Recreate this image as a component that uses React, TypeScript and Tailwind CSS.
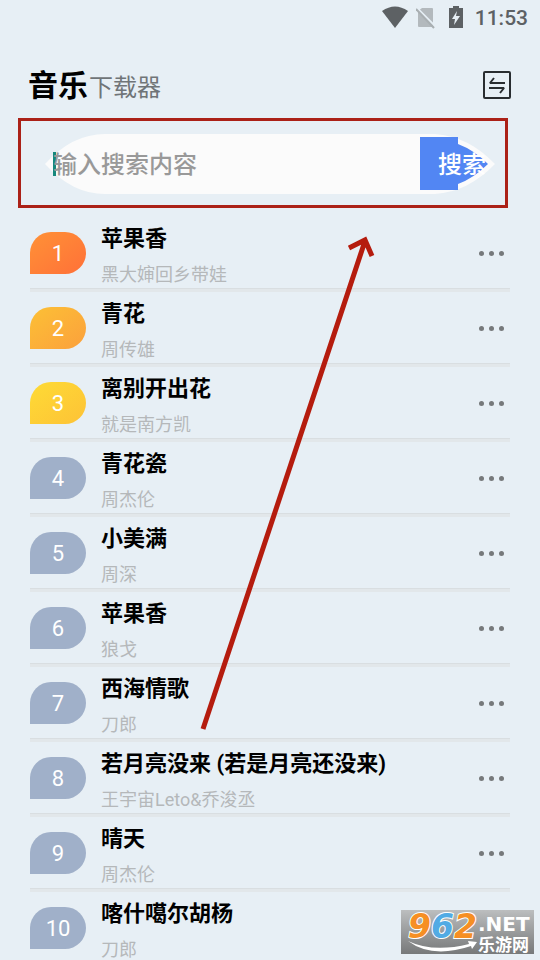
const songs = [
  { title: "苹果香", artist: "黑大婶回乡带娃" },
  { title: "青花", artist: "周传雄" },
  { title: "离别开出花", artist: "就是南方凯" },
  { title: "青花瓷", artist: "周杰伦" },
  { title: "小美满", artist: "周深" },
  { title: "苹果香", artist: "狼戈" },
  { title: "西海情歌", artist: "刀郎" },
  { title: "若月亮没来 (若是月亮还没来)", artist: "王宇宙Leto&乔浚丞" },
  { title: "晴天", artist: "周杰伦" },
  { title: "喀什噶尔胡杨", artist: "刀郎" },
];

const badgeColors = [
  "bg-linear-to-br from-[#ff9136] to-[#ff7038]",
  "bg-linear-to-br from-[#fcc035] to-[#fba03c]",
  "bg-linear-to-br from-[#fedb35] to-[#fdc236]",
];

function StatusBar() {
  return (
    <div className="flex h-9 items-center justify-end pr-3 text-[#5d6164]">
      <svg className="h-6 w-7" viewBox="0 0 28 24" fill="currentColor">
        <path d="M0 5Q13-4 26 5L13 22Z" />
      </svg>
      <svg className="ml-1.5 h-6 w-5" viewBox="0 0 20 24">
        <path d="M6 2H16Q17 2 17 3V21H3Q2 21 2 20V5Z" fill="#b3b9bd" />
        <path d="M1 2L19 20" stroke="#e7eff5" strokeWidth="2" />
        <path d="M0 3L18 22" stroke="#a9afb2" strokeWidth="2" />
      </svg>
      <svg className="ml-3 h-6 w-4" viewBox="0 0 16 24">
        <path d="M5 0H11V2H15V22H1V2H5Z" fill="currentColor" />
        <path d="M9 5L4 13H7L6 19L12 10H8Z" fill="#e7eff5" />
      </svg>
      <time className="ml-[11px] text-[21px] leading-9 font-medium">11:53</time>
    </div>
  );
}

function Header() {
  return (
    <header className="flex h-[82px] items-end justify-between pr-7 pb-2 pl-7">
      <h1 className="flex items-baseline gap-px leading-[48px]">
        <span className="text-[30px] font-bold text-black">音乐</span>
        <span className="text-2xl text-[#707578]">下载器</span>
      </h1>
      <button type="button" aria-label="切换" className="mb-2.5">
        <svg
          className="h-[30px] w-[30px] text-[#292d30]"
          viewBox="0 0 30 30"
          fill="none"
          stroke="currentColor"
          strokeWidth="2"
        >
          <rect x="2" y="2" width="26" height="26" rx="1" />
          <path d="M23 13H8L12 8M7 18H22L18 23" strokeLinejoin="bevel" />
        </svg>
      </button>
    </header>
  );
}

function SearchBar() {
  return (
    <div className="mr-8 ml-[18px] border-[3px] border-[#ab2117] pt-[13px] pr-2.5 pb-[11px] pl-6">
      <form className="relative flex h-[60px]" onSubmit={(e) => e.preventDefault()}>
        <div className="absolute inset-0 flex">
          <svg className="h-full w-[60px] text-[#fbfbfb]" viewBox="0 0 60 60" fill="currentColor">
            <path d="M0 30Q27 0 60 0V60Q27 60 0 30Z" />
          </svg>
          <div className="flex-1 bg-[#fbfbfb]" />
          <svg className="h-full w-[75px]" viewBox="0 0 75 60">
            <path d="M0 0H15Q48 2 75 30Q48 58 15 60H0Z" fill="#fbfbfb" />
            <path d="M0 3H38V10Q54 16 68 30Q54 44 38 50V56H0Z" fill="#5286f3" />
          </svg>
        </div>
        {/* text caret */}
        <span className="absolute top-[18px] left-2 h-6 w-[3px] bg-[#16887c]" />
        <input
          type="text"
          aria-label="搜索内容"
          placeholder="输入搜索内容"
          className="relative ml-2 min-w-0 flex-1 bg-transparent pt-0.5 text-2xl font-medium outline-none placeholder:text-[#999]"
        />
        <button
          type="submit"
          className="relative w-[75px] pt-0.5 pl-[18px] text-left text-2xl font-medium whitespace-nowrap text-white"
        >
          搜索
        </button>
      </form>
    </div>
  );
}

function SongRow({ rank, title, artist }: { rank: number; title: string; artist: string }) {
  return (
    <li className="flex h-[75px] shrink-0 flex-col">
      <div className="flex h-[71px] items-center">
        <span
          className={`flex h-[42px] w-14 shrink-0 items-center justify-center rounded-[21px] rounded-bl-none pt-0.5 text-[22px] text-white ${
            badgeColors[rank - 1] ?? "bg-[#a0b0c9]"
          }`}
        >
          {rank}
        </span>
        <div className="ml-[15px] min-w-0 flex-1 self-start pt-1">
          <h2 className="truncate text-[22px] leading-9 font-bold text-black">{title}</h2>
          <p className="truncate text-lg leading-9 text-[#b5b8ba]">{artist}</p>
        </div>
        <button type="button" aria-label="更多" className="flex gap-[5px] px-1.5 pt-2 pb-1.5">
          <span className="size-[5px] rounded-full bg-[#76797b]" />
          <span className="size-[5px] rounded-full bg-[#76797b]" />
          <span className="size-[5px] rounded-full bg-[#76797b]" />
        </button>
      </div>
      <div className="h-1 border-t border-[#d9dee1] bg-[#e2e7ea]" />
    </li>
  );
}

function Watermark() {
  return (
    <div className="absolute right-1.5 bottom-1.5 h-11 w-[133px] bg-linear-to-b from-[#bcbebf] via-[#999b9c] to-[#77797a]">
      <svg className="h-full w-full overflow-visible" viewBox="0 0 133 44">
        <text
          x="7"
          y="28"
          fill="#f68f24"
          fontFamily="DejaVu Sans, sans-serif"
          fontWeight="bold"
          fontStyle="italic"
          fontSize="33"
          stroke="#fff"
          strokeWidth="2"
          paintOrder="stroke"
        >
          9<tspan fill="#52abe4">6</tspan>2
        </text>
        <text
          x="77"
          y="21"
          fill="#fff"
          fontFamily="DejaVu Sans, sans-serif"
          fontWeight="bold"
          fontSize="20"
        >
          .NET
        </text>
        <text x="77" y="41" fill="#fff" fontWeight="bold" fontSize="17">
          乐游网
        </text>
        <path d="M7 31Q32 43 68 34L67 31L76 32L71 39L70 36Q31 49 7 31Z" fill="#fff" />
      </svg>
    </div>
  );
}

export default function App() {
  return (
    <div className="relative flex h-screen flex-col overflow-hidden bg-[#e7eff5] font-['Roboto','Noto_Sans_CJK_SC',sans-serif]">
      <StatusBar />
      <Header />
      <main className="flex min-h-0 flex-1 flex-col">
        <SearchBar />
        <ol className="mt-[9px] flex min-h-0 flex-1 flex-col overflow-y-auto px-[30px] [scrollbar-width:none]">
          {songs.map((song, i) => (
            <SongRow key={i} rank={i + 1} title={song.title} artist={song.artist} />
          ))}
        </ol>
      </main>

      {/* pointer up to the search box */}
      <svg
        className="pointer-events-none absolute top-[230px] left-[195px] h-[505px] w-[190px]"
        viewBox="0 0 190 505"
        fill="none"
        stroke="#b51c0e"
        strokeWidth="5"
      >
        <path d="M8 499L170 11M154 18L170 10L177 26" />
      </svg>
      <Watermark />
    </div>
  );
}
